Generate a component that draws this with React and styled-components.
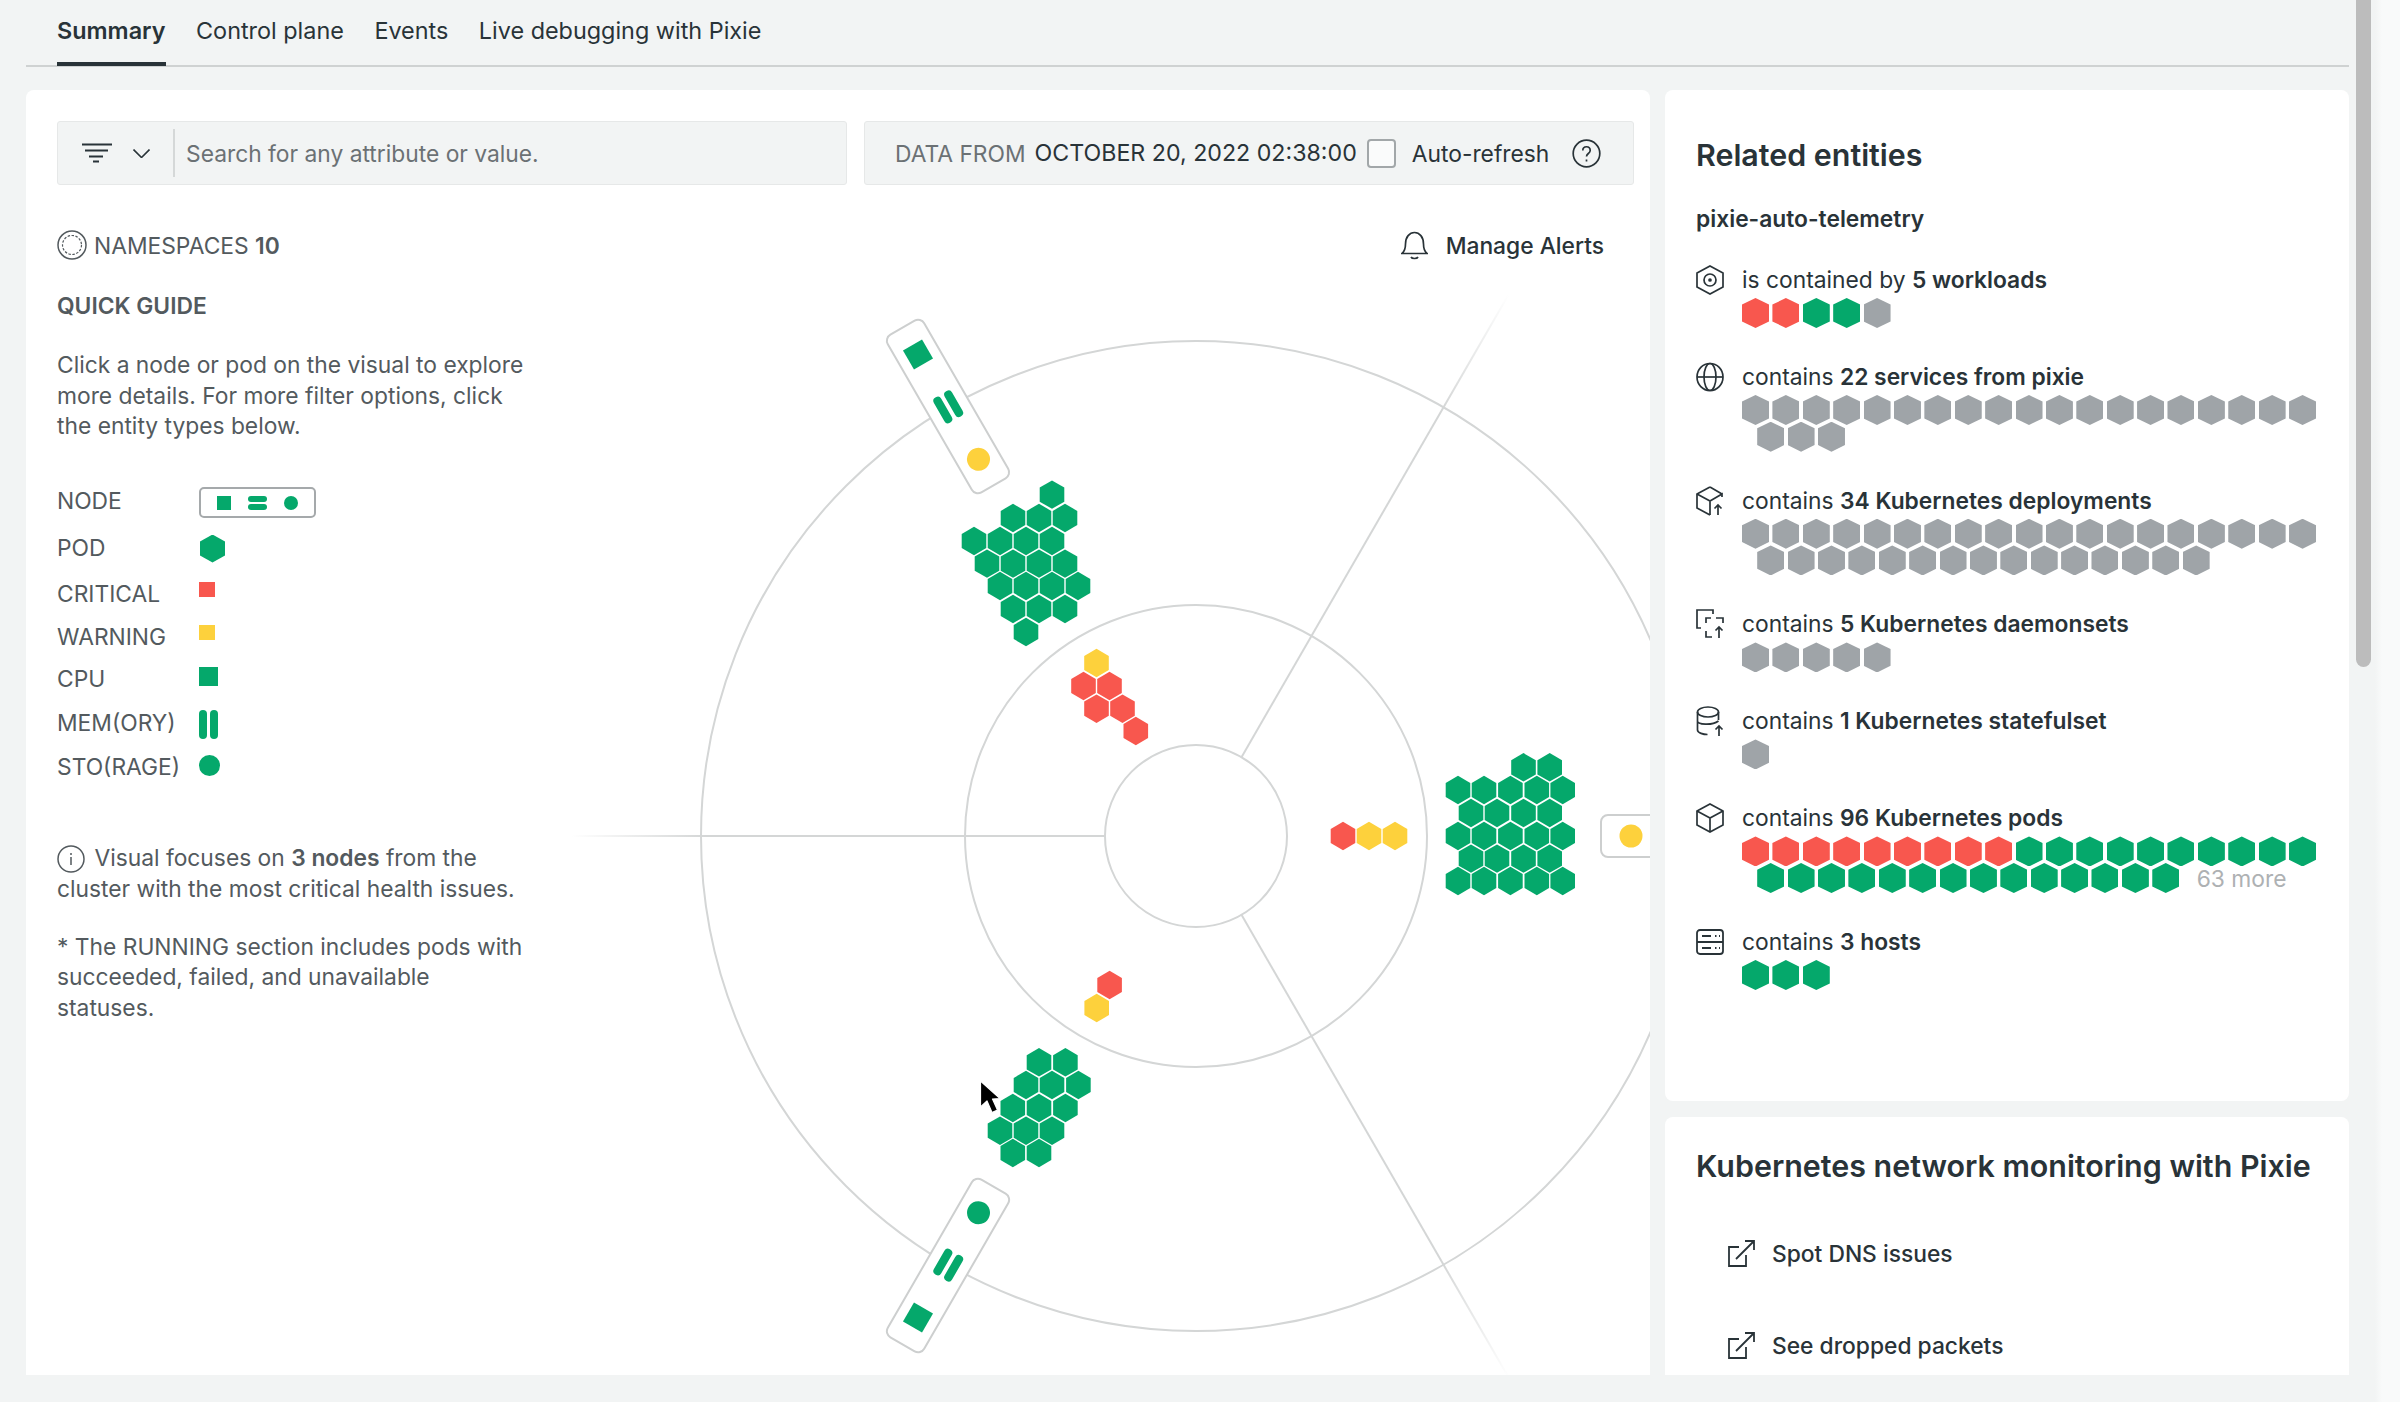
import React from "react";
import styled, { createGlobalStyle } from "styled-components";

const GREEN = "#05a86b";
const RED = "#f8574e";
const YELLOW = "#fdd13c";
const GREY = "#9fa4a8";
const INK = "#293338";
const BODY = "#535a5e";
const LINE = "#d4d6d6";

const CX = 1196;
const CY = 836;
const HEX_R = 14.2;

const GlobalStyle = createGlobalStyle`
  html, body {
    margin: 0;
    padding: 0;
    background: #f9fafa;
  }
  * {
    box-sizing: border-box;
  }
`;

const TABS = ["Summary", "Control plane", "Events", "Live debugging with Pixie"];

const LEGEND = [
  { label: "NODE", height: 46, shift: 2, icon: () => <LegendNodeIcon /> },
  { label: "POD", height: 48, shift: 1, icon: () => <PodMark /> },
  { label: "CRITICAL", height: 44, shift: -4, icon: () => <StatusSquare $color={RED} /> },
  { label: "WARNING", height: 41, shift: -4, icon: () => <StatusSquare $color={YELLOW} /> },
  { label: "CPU", height: 44, shift: -2, icon: () => <CpuSquare /> },
  { label: "MEM(ORY)", height: 43, shift: 2, icon: () => <MemoryMark><span /><span /></MemoryMark> },
  { label: "STO(RAGE)", height: 46, shift: -1, icon: () => <StorageDot /> },
];

const repeat = (color, n) => Array.from({ length: n }, () => color);

const ENTITIES = [
  {
    icon: "workload",
    pre: "is contained by ",
    bold: "5 workloads",
    rows: [[RED, RED, GREEN, GREEN, GREY]],
  },
  {
    icon: "globe",
    pre: "contains ",
    bold: "22 services from pixie",
    rows: [repeat(GREY, 19), repeat(GREY, 3)],
  },
  {
    icon: "deployment",
    pre: "contains ",
    bold: "34 Kubernetes deployments",
    rows: [repeat(GREY, 19), repeat(GREY, 15)],
  },
  {
    icon: "daemonset",
    pre: "contains ",
    bold: "5 Kubernetes daemonsets",
    rows: [repeat(GREY, 5)],
  },
  {
    icon: "statefulset",
    pre: "contains ",
    bold: "1 Kubernetes statefulset",
    rows: [[GREY]],
  },
  {
    icon: "pod",
    pre: "contains ",
    bold: "96 Kubernetes pods",
    rows: [[...repeat(RED, 9), ...repeat(GREEN, 10)], repeat(GREEN, 14)],
    more: "63 more",
  },
  {
    icon: "host",
    pre: "contains ",
    bold: "3 hosts",
    rows: [repeat(GREEN, 3)],
  },
];

// chart coordinates are the page's own, the viewBox starts where the chart area starts
const CLUSTERS = [
  // top node
  { y: 494.6, xs: [1052] },
  { y: 518, xs: [1013, 1039, 1065] },
  { y: 541, xs: [974, 1000, 1026, 1052] },
  { y: 563.6, xs: [987, 1013, 1039, 1065] },
  { y: 586, xs: [1000, 1026, 1052, 1078] },
  { y: 609, xs: [1013, 1039, 1065] },
  { y: 632, xs: [1026] },
  { y: 663, xs: [1096.5], color: YELLOW },
  { y: 686, xs: [1083.5, 1109.5], color: RED },
  { y: 708.7, xs: [1096.5, 1122.5], color: RED },
  { y: 731, xs: [1135.8], color: RED },
  // right node
  { y: 767.3, xs: [1523.5, 1549.7] },
  { y: 790, xs: [1458, 1484, 1510.4, 1536.8, 1562.7] },
  { y: 813, xs: [1471, 1497, 1523.5, 1549.7] },
  { y: 836, xs: [1458, 1484, 1510.4, 1536.8, 1562.7] },
  { y: 858.6, xs: [1471, 1497, 1523.5, 1549.7] },
  { y: 881, xs: [1458, 1484, 1510.4, 1536.8, 1562.7] },
  { y: 836, xs: [1343], color: RED },
  { y: 836, xs: [1369, 1395], color: YELLOW },
  // bottom node
  { y: 985, xs: [1109.6], color: RED },
  { y: 1008, xs: [1096.7], color: YELLOW },
  { y: 1062.3, xs: [1039, 1065.4] },
  { y: 1085, xs: [1026, 1052, 1078.4] },
  { y: 1108, xs: [1012.8, 1039, 1065.4] },
  { y: 1130.7, xs: [1000, 1026, 1052] },
  { y: 1153, xs: [1012.8, 1039] },
];

const NODES = [
  { angle: -120, dot: YELLOW },
  { angle: 0, dot: YELLOW },
  { angle: 120, dot: GREEN },
];

function hexPoints(x, y) {
  const w = HEX_R * 0.866;
  const h = HEX_R / 2;
  return [
    [x, y - HEX_R],
    [x + w, y - h],
    [x + w, y + h],
    [x, y + HEX_R],
    [x - w, y + h],
    [x - w, y - h],
  ]
    .map((p) => p.join(","))
    .join(" ");
}

function Spoke({ angle, id }) {
  const rad = (angle * Math.PI) / 180;
  const x1 = CX + Math.cos(rad) * 91;
  const y1 = CY + Math.sin(rad) * 91;
  const x2 = CX + Math.cos(rad) * 625;
  const y2 = CY + Math.sin(rad) * 625;
  const xm = CX + Math.cos(rad) * 490;
  const ym = CY + Math.sin(rad) * 490;
  return (
    <>
      <defs>
        <linearGradient id={id} gradientUnits="userSpaceOnUse" x1={xm} y1={ym} x2={x2} y2={y2}>
          <stop offset="0" stopColor={LINE} />
          <stop offset="1" stopColor={LINE} stopOpacity="0" />
        </linearGradient>
      </defs>
      <line x1={x1} y1={y1} x2={x2} y2={y2} stroke={`url(#${id})`} strokeWidth="2" />
    </>
  );
}

function NodeMark({ angle, dot }) {
  return (
    <g transform={`rotate(${angle} ${CX} ${CY})`}>
      <rect x={CX + 405} y={CY - 21} width="182" height="42" rx="7" fill="#fff" stroke="#cdcfcf" strokeWidth="2" />
      <circle cx={CX + 435} cy={CY} r="11.5" fill={dot} />
      <rect x={CX + 481} y={CY - 10.5} width="29" height="8.5" rx="4" fill={GREEN} />
      <rect x={CX + 481} y={CY + 2} width="29" height="8.5" rx="4" fill={GREEN} />
      <rect x={CX + 545} y={CY - 11} width="22" height="22" fill={GREEN} />
    </g>
  );
}

function Radar() {
  return (
    <ChartSvg viewBox="557 185 1093 1190">
      <Spoke angle={180} id="spoke-left" />
      <Spoke angle={-60} id="spoke-top" />
      <Spoke angle={60} id="spoke-bottom" />
      {[91, 231, 495].map((r) => (
        <circle key={r} cx={CX} cy={CY} r={r} fill="none" stroke={LINE} strokeWidth="2" />
      ))}
      {CLUSTERS.map((row, i) =>
        row.xs.map((x) => (
          <polygon key={`${i}-${x}`} points={hexPoints(x, row.y)} fill={row.color || GREEN} />
        ))
      )}
      {NODES.map((n) => (
        <NodeMark key={n.angle} {...n} />
      ))}
      <path
        d="M980.5 1081 L980.5 1107 L987 1101 L992 1112.5 L997.5 1110 L992.5 1099 L1000 1098.5 Z"
        fill="#000"
        stroke="#fff"
        strokeWidth="1.2"
        strokeLinejoin="round"
      />
    </ChartSvg>
  );
}

function FilterIcon() {
  return (
    <IconSvg width="30" height="20" viewBox="0 0 30 20" strokeWidth="2">
      <path d="M0 1.5h30M3 7.5h23M7 13.5h14M11 18.5h6" />
    </IconSvg>
  );
}

function ChevronIcon() {
  return (
    <IconSvg width="17" height="9" viewBox="0 0 17 9" strokeWidth="1.6">
      <path d="M.5.5l8 8 8-8" />
    </IconSvg>
  );
}

function NamespaceIcon() {
  return (
    <IconSvg width="30" height="30" viewBox="0 0 30 30" strokeWidth="1.5">
      <circle cx="15" cy="15" r="14" />
      <circle cx="15" cy="15" r="9.5" strokeDasharray="2.5 1.5" strokeWidth="1.2" />
    </IconSvg>
  );
}

function BellIcon() {
  return (
    <IconSvg width="27" height="29" viewBox="0 0 27 29" strokeWidth="1.7">
      <path d="M1 22.5c3-2.5 3.5-5 3.5-9.5C4.5 6 8.5 1.5 13.5 1.5S22.5 6 22.5 13c0 4.5.5 7 3.5 9.5z" />
      <path d="M10 26c1 2 6 2 7 0" />
    </IconSvg>
  );
}

function HelpIcon() {
  return (
    <IconSvg width="29" height="29" viewBox="0 0 29 29" strokeWidth="1.7">
      <circle cx="14.5" cy="14.5" r="13.3" />
      <path d="M10.8 11.5c0-5 7.4-5 7.4 0 0 3-3.7 3-3.7 6" />
      <path d="M14.5 20.5v2" />
    </IconSvg>
  );
}

function InfoIcon() {
  return (
    <IconSvg width="28" height="28" viewBox="0 0 28 28" strokeWidth="1.5">
      <circle cx="14" cy="14" r="13" />
      <path d="M14 12v8M14 8v2" />
    </IconSvg>
  );
}

function ExternalIcon() {
  return (
    <IconSvg width="27" height="27" viewBox="0 0 27 27" strokeWidth="1.8">
      <path d="M11 7H1v19h17V15" />
      <path d="M8 19L26 1M17 1h9v9" />
    </IconSvg>
  );
}

function EntityIcon({ name }) {
  if (name === "workload") {
    return (
      <IconSvg width="28" height="30" viewBox="0 0 28 30" strokeWidth="1.7">
        <path d="M14 1l13 7v14l-13 7-13-7V8z" />
        <circle cx="14" cy="15" r="6" />
        <circle cx="14" cy="15" r="1" fill="currentColor" />
      </IconSvg>
    );
  }
  if (name === "globe") {
    return (
      <IconSvg width="28" height="30" viewBox="0 0 28 30" strokeWidth="1.7">
        <ellipse cx="14" cy="15" rx="13" ry="13.5" />
        <ellipse cx="14" cy="15" rx="6" ry="13.5" />
        <path d="M1 15h26" />
      </IconSvg>
    );
  }
  if (name === "deployment") {
    return (
      <IconSvg width="28" height="30" viewBox="0 0 28 30" strokeWidth="1.7">
        <path d="M14 1l12 7M14 1L1 8v14l13 7" />
        <path d="M1 8l13 7 12-7v3M14 15v14" />
        <path d="M22 29V19M18.5 22.5L22 19l3.5 3.5" />
      </IconSvg>
    );
  }
  if (name === "daemonset") {
    return (
      <IconSvg width="28" height="30" viewBox="0 0 28 30" strokeWidth="1.7">
        <path d="M17 5V1H1v18h4" />
        <path d="M15 9H10v5M20 9h7v5M10 22v6h6" />
        <path d="M23 29V18M19.5 21.5L23 18l3.5 3.5" />
      </IconSvg>
    );
  }
  if (name === "statefulset") {
    return (
      <IconSvg width="28" height="30" viewBox="0 0 28 30" strokeWidth="1.7">
        <ellipse cx="12" cy="6" rx="10.5" ry="5" />
        <path d="M1.5 6v18c0 3 6 4.5 10 4.5M22.5 6v8M1.5 15c0 3.5 14 5 21 0" />
        <path d="M23 30V20M19.5 23.5L23 20l3.5 3.5" />
      </IconSvg>
    );
  }
  if (name === "pod") {
    return (
      <IconSvg width="28" height="30" viewBox="0 0 28 30" strokeWidth="1.7">
        <path d="M14 1l13 7v14l-13 7-13-7V8z" />
        <path d="M1 8l13 7 13-7M14 15v14" />
      </IconSvg>
    );
  }
  return (
    <IconSvg width="28" height="26" viewBox="0 0 28 26" strokeWidth="1.8">
      <rect x="1" y="1" width="26" height="24" rx="3" />
      <path d="M1 13h26M6 7h9M6 19h9M19 7h1.5M23 7h1M19 19h1.5M23 19h1" />
    </IconSvg>
  );
}

function LegendNodeIcon() {
  return (
    <NodePill>
      <NodeSquare />
      <NodeBars>
        <span />
        <span />
      </NodeBars>
      <NodeDot />
    </NodePill>
  );
}

function Entity({ item }) {
  return (
    <EntityRow>
      <EntityIconCell>
        <EntityIcon name={item.icon} />
      </EntityIconCell>
      <div>
        <EntityText>
          {item.pre}
          <strong>{item.bold}</strong>
        </EntityText>
        {item.rows.map((row, i) => (
          <HexRow key={i} $indent={i > 0}>
            {row.map((color, j) => (
              <Hex key={j} $color={color} />
            ))}
            {i === 1 && item.more && <More>{item.more}</More>}
          </HexRow>
        ))}
      </div>
    </EntityRow>
  );
}

export default function App() {
  return (
    <Page>
      <GlobalStyle />
      <Main>
        <Tabs>
          {TABS.map((tab, i) => (
            <Tab key={tab} $active={i === 0}>
              {tab}
            </Tab>
          ))}
        </Tabs>
        <Panels>
          <SummaryCard>
            <Toolbar>
              <SearchBox>
                <FilterButton>
                  <FilterIcon />
                  <ChevronIcon />
                </FilterButton>
                <SearchText>Search for any attribute or value.</SearchText>
              </SearchBox>
              <DateBox>
                <DateLabel>DATA FROM</DateLabel>
                <DateValue>OCTOBER 20, 2022 02:38:00</DateValue>
                <Checkbox />
                <RefreshLabel>Auto-refresh</RefreshLabel>
                <HelpIcon />
              </DateBox>
            </Toolbar>
            <Body>
              <Guide>
                <Namespaces>
                  <NamespaceIcon />
                  <span>
                    NAMESPACES <strong>10</strong>
                  </span>
                </Namespaces>
                <GuideTitle>QUICK GUIDE</GuideTitle>
                <GuideText>
                  Click a node or pod on the visual to explore more details. For more filter options, click the
                  entity types below.
                </GuideText>
                <Legend>
                  {LEGEND.map((row) => (
                    <LegendRow key={row.label} $height={row.height}>
                      <span>{row.label}</span>
                      <LegendIcon $shift={row.shift || 0}>{row.icon()}</LegendIcon>
                    </LegendRow>
                  ))}
                </Legend>
                <Note>
                  <InfoIcon /> Visual focuses on <strong>3 nodes</strong> from the cluster with the most critical
                  health issues.
                </Note>
                <Footnote>* The RUNNING section includes pods with succeeded, failed, and unavailable statuses.</Footnote>
              </Guide>
              <ChartArea>
                <Radar />
                <ManageAlerts>
                  <BellIcon />
                  Manage Alerts
                </ManageAlerts>
              </ChartArea>
            </Body>
          </SummaryCard>
          <SideColumn>
            <RelatedCard>
              <CardTitle>Related entities</CardTitle>
              <EntityName>pixie-auto-telemetry</EntityName>
              <EntityList>
                {ENTITIES.map((item) => (
                  <Entity key={item.icon} item={item} />
                ))}
              </EntityList>
            </RelatedCard>
            <PixieCard>
              <CardTitle>Kubernetes network monitoring with Pixie</CardTitle>
              <LinkList>
                <LinkRow>
                  <ExternalIcon />
                  Spot DNS issues
                </LinkRow>
                <LinkRow>
                  <ExternalIcon />
                  See dropped packets
                </LinkRow>
              </LinkList>
            </PixieCard>
          </SideColumn>
        </Panels>
      </Main>
      <ScrollRail>
        <ScrollThumb />
      </ScrollRail>
    </Page>
  );
}

const Page = styled.div`
  display: flex;
  width: 2400px;
  height: 1402px;
  overflow: hidden;
  font-family: Inter, "Liberation Sans", sans-serif;
  font-size: 22.8px;
  color: ${INK};
`;

const Main = styled.div`
  display: flex;
  flex-direction: column;
  flex: none;
  width: 2356px;
  height: 100%;
  padding: 0 7px 27px 26px;
  background: #f2f4f4;
`;

const ScrollRail = styled.div`
  flex: 1;
  background: linear-gradient(to right, #f2f4f4 0 19px, #f9fafa 26px);
`;

const ScrollThumb = styled.div`
  width: 15px;
  height: 667px;
  border-radius: 0 0 8px 8px;
  background: #bcbcbc;
`;

const Tabs = styled.div`
  display: flex;
  flex: none;
  gap: 30.5px;
  height: 67px;
  padding-left: 31px;
  border-bottom: 2px solid #cfd2d2;
`;

const Tab = styled.div`
  height: 66px;
  padding-top: 16px;
  font-size: 23.4px;
  line-height: 30px;
  font-weight: ${(p) => (p.$active ? 600 : 400)};
  border-bottom: 4px solid ${(p) => (p.$active ? INK : "transparent")};
`;

const Panels = styled.div`
  display: flex;
  flex: 1;
  gap: 15px;
  min-height: 0;
  margin-top: 23px;
`;

const SummaryCard = styled.section`
  display: flex;
  flex-direction: column;
  flex: none;
  width: 1624px;
  padding-top: 31px;
  overflow: hidden;
  border-radius: 8px 8px 0 0;
  background: #fff;
`;

const Toolbar = styled.div`
  display: flex;
  flex: none;
  gap: 17px;
  height: 64px;
  margin: 0 16px 0 31px;
`;

const SearchBox = styled.div`
  display: flex;
  align-items: center;
  flex: none;
  width: 790px;
  border: 1px solid #e6e8e8;
  border-radius: 3px;
  background: #f2f4f4;
`;

const FilterButton = styled.div`
  display: flex;
  align-items: center;
  gap: 21px;
  flex: none;
  width: 117px;
  height: 48px;
  padding-left: 24px;
  border-right: 2px solid #d5d8d8;
  color: ${INK};
`;

const SearchText = styled.span`
  padding-left: 11px;
  color: #6b7174;
`;

const DateBox = styled.div`
  display: flex;
  align-items: center;
  flex: 1;
  padding-left: 30px;
  border: 1px solid #e6e8e8;
  border-radius: 3px;
  background: #f2f4f4;
  color: ${INK};
`;

const DateLabel = styled.span`
  color: #6b7174;
  margin-right: 9px;
`;

const DateValue = styled.span`
  margin-right: 10px;
  font-size: 23.2px;
`;

const Checkbox = styled.span`
  flex: none;
  width: 29px;
  height: 29px;
  margin-right: 16px;
  border: 2px solid #a2a7a9;
  border-radius: 4px;
  background: #fafbfb;
`;

const RefreshLabel = styled.span`
  margin-right: 23px;
`;

const Body = styled.div`
  display: flex;
  flex: 1;
  min-height: 0;
`;

const Guide = styled.div`
  flex: none;
  width: 531px;
  padding: 45px 0 0 31px;
  color: ${BODY};
`;

const Namespaces = styled.div`
  display: flex;
  align-items: center;
  gap: 7px;
  height: 30px;
  strong {
    font-weight: 600;
  }
`;

const GuideTitle = styled.h4`
  margin: 31px 0 0;
  font-size: 22.8px;
  font-weight: 600;
  line-height: 30px;
  color: ${BODY};
`;

const GuideText = styled.p`
  width: 470px;
  margin: 29px 0 0;
  line-height: 30.5px;
`;

const Legend = styled.div`
  margin-top: 36px;
`;

const LegendRow = styled.div`
  display: grid;
  grid-template-columns: 142px auto;
  align-items: center;
  height: ${(p) => p.$height}px;
`;

const LegendIcon = styled.div`
  display: flex;
  transform: translateY(${(p) => p.$shift}px);
`;

const NodePill = styled.div`
  display: flex;
  align-items: center;
  justify-content: space-between;
  width: 117px;
  height: 31px;
  padding: 0 16px;
  border: 2px solid #a5a9ab;
  border-radius: 5px;
`;

const NodeSquare = styled.span`
  width: 14px;
  height: 14px;
  background: ${GREEN};
`;

const NodeBars = styled.span`
  display: flex;
  flex-direction: column;
  gap: 2px;
  span {
    width: 19px;
    height: 6px;
    border-radius: 3px;
    background: ${GREEN};
  }
`;

const NodeDot = styled.span`
  width: 14px;
  height: 14px;
  border-radius: 50%;
  background: ${GREEN};
`;

const PodMark = styled.span`
  width: 25px;
  height: 28px;
  margin-left: 1px;
  clip-path: polygon(50% 0, 100% 25%, 100% 75%, 50% 100%, 0 75%, 0 25%);
  background: ${GREEN};
`;

const StatusSquare = styled.span`
  width: 16px;
  height: 15px;
  background: ${(p) => p.$color};
`;

const CpuSquare = styled.span`
  width: 19px;
  height: 19px;
  background: ${GREEN};
`;

const MemoryMark = styled.span`
  display: flex;
  gap: 3px;
  span {
    width: 8px;
    height: 29px;
    border-radius: 4px;
    background: ${GREEN};
  }
`;

const StorageDot = styled.span`
  width: 21px;
  height: 21px;
  border-radius: 50%;
  background: ${GREEN};
`;

const Note = styled.p`
  width: 470px;
  margin: 52px 0 0;
  line-height: 31px;
  strong {
    font-weight: 600;
  }
  svg {
    vertical-align: -7px;
    margin-right: 3px;
  }
`;

const Footnote = styled.p`
  width: 470px;
  margin: 28px 0 0;
  line-height: 30.5px;
`;

const ChartArea = styled.div`
  position: relative;
  flex: 1;
`;

const ChartSvg = styled.svg`
  display: block;
  width: 1093px;
  height: 1190px;
`;

const ManageAlerts = styled.div`
  position: absolute;
  top: 45px;
  right: 46px;
  display: flex;
  align-items: center;
  gap: 18px;
  height: 30px;
  font-weight: 500;
`;

const SideColumn = styled.div`
  display: flex;
  flex-direction: column;
  flex: none;
  gap: 16px;
  width: 684px;
`;

const RelatedCard = styled.section`
  flex: none;
  height: 1011px;
  padding: 47px 0 0 31px;
  border-radius: 8px;
  background: #fff;
`;

const PixieCard = styled.section`
  flex: 1;
  min-height: 0;
  padding: 31px 0 0 31px;
  border-radius: 8px 8px 0 0;
  background: #fff;
  overflow: hidden;
`;

const CardTitle = styled.h3`
  margin: 0;
  font-size: 30.4px;
  font-weight: 600;
  line-height: 36px;
  color: ${INK};
`;

const EntityName = styled.div`
  margin-top: 28px;
  font-weight: 600;
  line-height: 36px;
`;

const EntityList = styled.div`
  display: flex;
  flex-direction: column;
  gap: 31px;
  margin-top: 25px;
`;

const EntityRow = styled.div`
  display: grid;
  grid-template-columns: 46px auto;
`;

const EntityIconCell = styled.div`
  display: flex;
  align-items: center;
  height: 36px;
`;

const EntityText = styled.div`
  height: 36px;
  line-height: 36px;
  strong {
    font-weight: 600;
  }
`;

const HexRow = styled.div`
  display: flex;
  align-items: center;
  gap: 3.4px;
  height: 30px;
  ${(p) => p.$indent && "margin: -3.3px 0 0 15.2px;"}
`;

const Hex = styled.span`
  flex: none;
  width: 27px;
  height: 30px;
  clip-path: polygon(50% 0, 100% 22%, 100% 78%, 50% 100%, 0 78%, 0 22%);
  background: ${(p) => p.$color};
`;

const More = styled.span`
  margin-left: 14px;
  color: #aeb1b3;
`;

const LinkList = styled.div`
  display: flex;
  flex-direction: column;
  gap: 62px;
  margin: 54px 0 0 32px;
`;

const LinkRow = styled.div`
  display: flex;
  align-items: center;
  gap: 17px;
  height: 30px;
  font-weight: 500;
`;

const IconSvg = styled.svg.attrs({ fill: "none", stroke: "currentColor" })`
  flex: none;
  display: inline-block;
`;
